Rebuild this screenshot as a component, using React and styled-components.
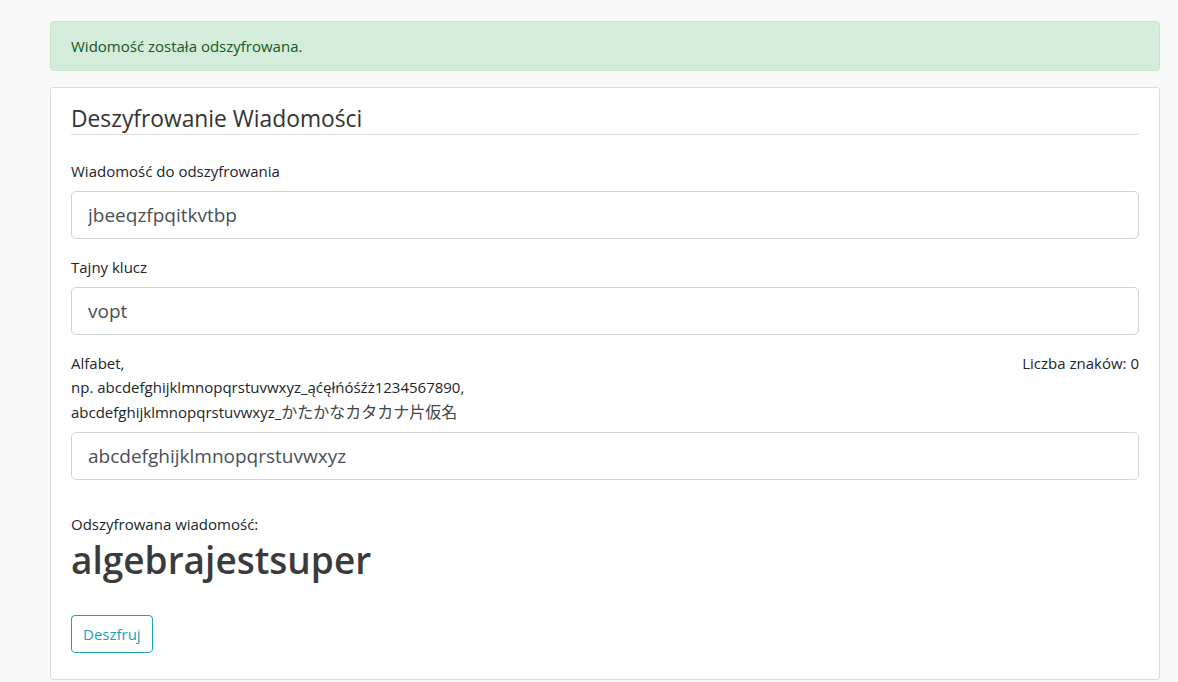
import React from "react";
import styled, { createGlobalStyle } from "styled-components";

const Global = createGlobalStyle`
  html, body { margin: 0; padding: 0; }
  body {
    background: #f9f9f9;
    font-family: "Open Sans", "Noto Sans CJK JP", sans-serif;
    font-size: 16px;
    line-height: 1.5;
    color: #212529;
  }
  * { box-sizing: border-box; }
`;

const Page = styled.div`
  padding: 21px 0 0 50px;
  width: 1160px;
`;

const Alert = styled.div`
  background: #d4edda;
  border: 1px solid #c3e6cb;
  color: #155724;
  border-radius: 4px;
  padding: 12px 20px;
  margin-bottom: 16px;
  font-size: 15px;
  line-height: 24px;
`;

const Card = styled.div`
  background: #fff;
  border: 1px solid #dcdcdc;
  border-radius: 3px;
  padding: 16px 20px 26px;
`;

const Title = styled.h4`
  margin: 0 0 24px;
  font-size: 22.8px;
  font-weight: 400;
  line-height: 29px;
  color: #333;
  padding-bottom: 1px;
  border-bottom: 1px solid #dedede;
`;

const Group = styled.div`
  margin-bottom: ${(p) => p.$mb || 16}px;
`;

const LabelRow = styled.div`
  display: flex;
  justify-content: space-between;
  align-items: flex-start;
  margin-bottom: 8px;
  font-size: 15px;
  line-height: 24px;
  color: #212529;
`;

const Label = styled.label`
  display: block;
`;

const Kana = styled.span`
  font-family: "Noto Sans CJK JP", sans-serif;
  font-size: 16px;
  color: #444;
`;

const Count = styled.span`
  text-align: right;
`;

const Input = styled.input`
  display: block;
  width: 100%;
  height: 48px;
  padding: 8px 16px;
  font-family: inherit;
  font-size: 19px;
  line-height: 30px;
  color: #495057;
  background: #fff;
  border: 1px solid #ced4da;
  border-radius: 5px;
  outline: none;
`;

const ResultLabel = styled.div`
  font-size: 15px;
  line-height: 24px;
  color: #212529;
`;

const Result = styled.h1`
  margin: 0 0 31px;
  font-size: 37px;
  font-weight: 600;
  line-height: 48px;
  color: #3b3b3b;
`;

const Button = styled.button`
  font-family: inherit;
  font-size: 15px;
  line-height: 24px;
  padding: 6px 11px;
  color: #17a2b8;
  background: transparent;
  border: 1px solid #17a2b8;
  border-radius: 4px;
  cursor: pointer;
`;

export default function App() {
  return (
    <>
      <Global />
      <Page>
        <Alert>Widomość została odszyfrowana.</Alert>
        <Card>
          <Title>Deszyfrowanie Wiadomości</Title>
          <Group>
            <LabelRow>
              <Label>Wiadomość do odszyfrowania</Label>
            </LabelRow>
            <Input defaultValue="jbeeqzfpqitkvtbp" />
          </Group>
          <Group>
            <LabelRow>
              <Label>Tajny klucz</Label>
            </LabelRow>
            <Input defaultValue="vopt" />
          </Group>
          <Group $mb={32}>
            <LabelRow>
              <Label>
                Alfabet,
                <br />
                np. abcdefghijklmnopqrstuvwxyz_ąćęłńóśźż1234567890,
                <br />
                abcdefghijklmnopqrstuvwxyz_<Kana>かたかなカタカナ片仮名</Kana>
              </Label>
              <Count>Liczba znaków: 0</Count>
            </LabelRow>
            <Input defaultValue="abcdefghijklmnopqrstuvwxyz" />
          </Group>
          <ResultLabel>Odszyfrowana wiadomość:</ResultLabel>
          <Result>algebrajestsuper</Result>
          <Button>Deszfruj</Button>
        </Card>
      </Page>
    </>
  );
}
